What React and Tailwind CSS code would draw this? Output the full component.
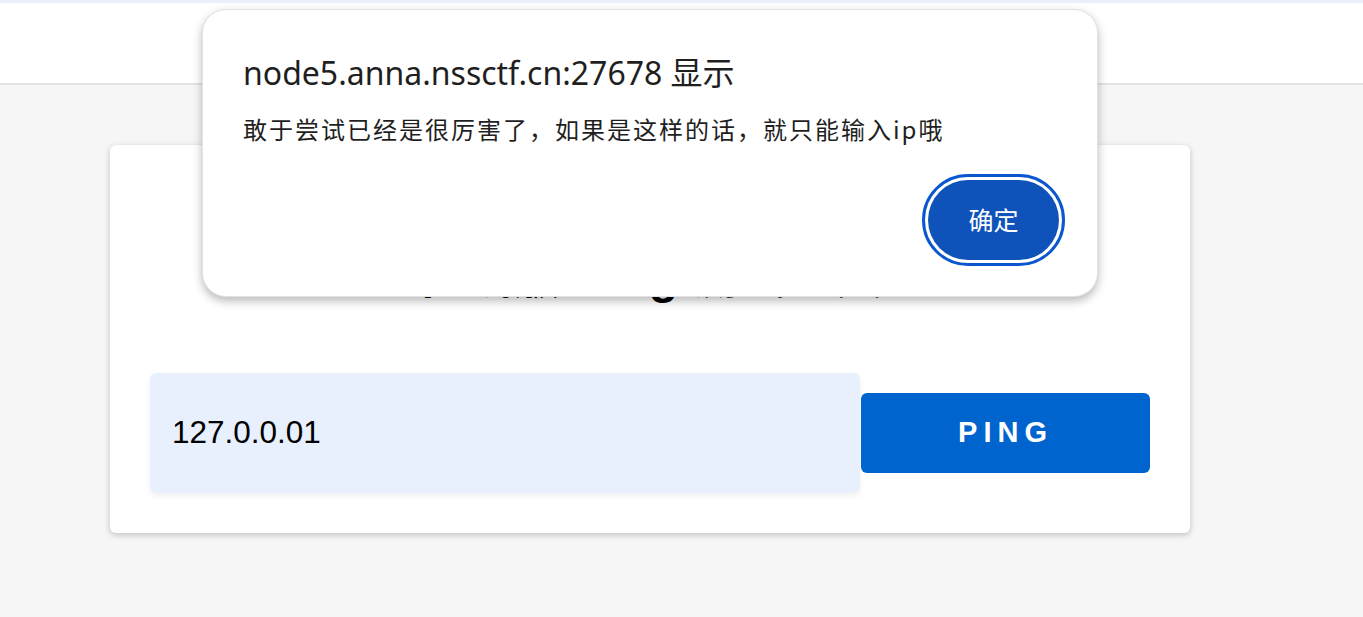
export default function App() {
  return (
    <div className="relative min-h-[617px] w-full bg-[#f6f6f6] font-['Liberation_Sans','Noto_Sans_CJK_SC',sans-serif]">
      <div className="h-[3px] bg-[#ebeff9]" />
      <div className="h-[82px] border-b-2 border-[#e3e3e3] bg-white" />
      <div className="pl-[110px] pt-[60px]">
        <div className="w-[1080px] rounded-[6px] bg-white px-[40px] pb-[40px] pt-[40px] shadow-[0_2px_6px_rgba(0,0,0,0.22)]">
          <h1 className="flex h-[148px] items-end justify-center pb-[32px] text-[48px] font-bold leading-none text-black">
            在线版 Ping 测试工具
          </h1>
          <div className="mt-[40px] flex items-center">
            <div className="flex h-[120px] w-[710px] items-center rounded-[6px] bg-[#e8f0fe] pl-[22px] text-[31.5px] text-black shadow-[0_3px_6px_rgba(0,0,0,0.06)]">
              127.0.0.01
            </div>
            <button className="ml-[1px] flex h-[80px] w-[289px] items-center justify-center rounded-[6px] bg-[#0064cf] text-[29px] font-bold tracking-[6px] text-white">
              PING
            </button>
          </div>
        </div>
      </div>

      <div className="absolute left-[202px] top-[9px] h-[288px] w-[896px] rounded-[24px] border border-[#e2e2e2] bg-white pl-[40px] pr-[32px] shadow-[0_4px_10px_rgba(0,0,0,0.28)]">
        <div className="pt-[43px] font-['Noto_Sans','Noto_Sans_CJK_SC',sans-serif] text-[32px] leading-[40px] text-[#1f1f1f]">
          node5.anna.nssctf.cn:27678 显示
        </div>
        <div className="mt-[19px] font-['Noto_Sans_CJK_SC',sans-serif] text-[24px] leading-[34px] tracking-[2px] text-[#1f1f1f]">
          敢于尝试已经是很厉害了，如果是这样的话，就只能输入ip哦
        </div>
        <div className="mt-[28px] flex justify-end">
          <div className="rounded-full border-[3px] border-[#0b57d0] p-[3px]">
            <button className="flex h-[80px] w-[131px] items-center justify-center rounded-full bg-[#0f52ba] font-['Noto_Sans_CJK_SC',sans-serif] text-[25px] text-white">
              确定
            </button>
          </div>
        </div>
      </div>
    </div>
  );
}
